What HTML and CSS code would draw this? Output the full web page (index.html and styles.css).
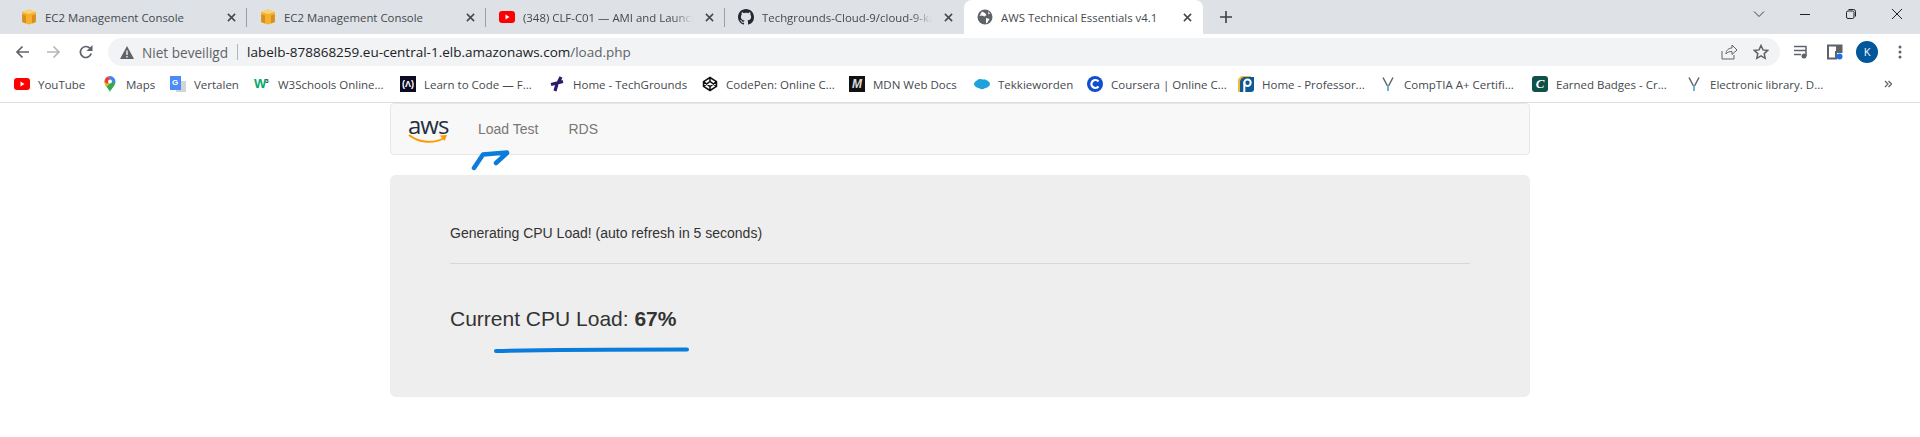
FILE: index.html
```html
<!DOCTYPE html>
<html lang="nl">
<head>
  <meta charset="UTF-8">
  <title>AWS Technical Essentials v4.1</title>
  <link rel="stylesheet" href="styles.css">
</head>
<body>

  <svg class="defs" width="0" height="0" aria-hidden="true">
    <symbol id="ic-box" viewBox="0 0 16 16">
      <path fill="#f5b02e" d="M8 .5 14.800 3v10L8 15.500 1.200 13V3z"/>
      <path fill="#d98f1c" d="M1.200 5.200 5 6.400v8.100l-3.800-1.500zM14.800 5.200 11 6.400v8.100l3.800-1.500z"/>
      <path fill="#fbd27a" d="M8 .5 14.800 3 8 5 1.200 3z"/>
    </symbol>
    <symbol id="ic-close" viewBox="0 0 10 10">
      <path d="M1 1l8 8M9 1L1 9" stroke="#45494e" stroke-width="1.700" fill="none"/>
    </symbol>
    <symbol id="ic-v" viewBox="0 0 16 16">
      <path d="M3 1.500 7.500 10M13 1.500 8.500 10" stroke="#5b6770" stroke-width="1.500" fill="none"/>
      <path d="M8 9.500V15" stroke="#6fb6c9" stroke-width="2" fill="none"/>
    </symbol>
  </svg>

  <header class="browser">
    <div class="tabstrip">
      <div class="tab">
        <svg class="favicon"><use href="#ic-box"/></svg>
        <span class="tab-title">EC2 Management Console</span>
        <svg class="tab-close"><use href="#ic-close"/></svg>
      </div>
      <div class="tab">
        <svg class="favicon"><use href="#ic-box"/></svg>
        <span class="tab-title">EC2 Management Console</span>
        <svg class="tab-close"><use href="#ic-close"/></svg>
      </div>
      <div class="tab">
        <svg class="favicon" viewBox="0 0 16 16"><rect y="2" width="16" height="12" rx="3" fill="#f00"/><path d="M6.500 5.500v5l4-2.500z" fill="#fff"/></svg>
        <span class="tab-title tab-fade">(348) CLF-C01 — AMI and Launch</span>
        <svg class="tab-close"><use href="#ic-close"/></svg>
      </div>
      <div class="tab tab-last">
        <svg class="favicon" viewBox="0 0 16 16"><path fill="#24292f" d="M8 0C3.58 0 0 3.58 0 8c0 3.54 2.29 6.53 5.47 7.59.4.07.55-.17.55-.38 0-.19-.01-.82-.01-1.49-2.01.37-2.53-.49-2.69-.94-.09-.23-.48-.94-.82-1.13-.28-.15-.68-.52-.01-.53.63-.01 1.08.58 1.23.82.72 1.21 1.87.87 2.33.66.07-.52.28-.87.51-1.07-1.78-.2-3.64-.89-3.64-3.95 0-.87.31-1.59.82-2.15-.08-.2-.36-1.02.08-2.12 0 0 .67-.21 2.2.82.64-.18 1.32-.27 2-.27.68 0 1.36.09 2 .27 1.53-1.04 2.2-.82 2.2-.82.44 1.1.16 1.92.08 2.12.51.56.82 1.27.82 2.15 0 3.07-1.87 3.75-3.65 3.95.29.25.54.73.54 1.48 0 1.07-.01 1.93-.01 2.2 0 .21.15.46.55.38A8.013 8.013 0 0016 8c0-4.42-3.58-8-8-8z"/></svg>
        <span class="tab-title tab-fade">Techgrounds-Cloud-9/cloud-9-ka</span>
        <svg class="tab-close"><use href="#ic-close"/></svg>
      </div>
      <div class="tab tab-active">
        <svg class="favicon" viewBox="0 0 16 16"><circle cx="8" cy="8" r="7.500" fill="#5f6368"/><path fill="#fff" d="M5 2.500l3 1.500 1.500 2-2 1.500L5 6.500 2.500 7zM9 9l3.500 1-2 3.500-1.500 1zM11 2.500l2 2-1.500 1z"/></svg>
        <span class="tab-title">AWS Technical Essentials v4.1</span>
        <svg class="tab-close"><use href="#ic-close"/></svg>
      </div>
      <svg class="new-tab" viewBox="0 0 12 12"><path d="M6 0v12M0 6h12" stroke="#3c4043" stroke-width="1.600"/></svg>
      <div class="window-controls">
        <svg viewBox="0 0 12 12"><path d="M1 3.500l5 5 5-5" stroke="#3c4043" fill="none"/></svg>
        <svg viewBox="0 0 12 12"><path d="M1 6.500h10" stroke="#202124" stroke-width="1"/></svg>
        <svg viewBox="0 0 12 12"><rect x="1.500" y="3" width="7.500" height="7.500" rx="1.500" stroke="#202124" fill="none"/><path d="M3.500 1.500h5a2 2 0 0 1 2 2v5" stroke="#202124" fill="none"/></svg>
        <svg viewBox="0 0 12 12"><path d="M1 1l10 10M11 1L1 11" stroke="#202124"/></svg>
      </div>
    </div>

    <div class="toolbar">
      <svg class="nav-btn" viewBox="0 0 14 14"><path d="M14 7H2M7.500 1.500 2 7l5.500 5.500" stroke="#5f6368" stroke-width="1.700" fill="none"/></svg>
      <svg class="nav-btn" viewBox="0 0 14 14"><path d="M0 7h12M6.500 1.500 12 7l-5.500 5.500" stroke="#b4b7ba" stroke-width="1.700" fill="none"/></svg>
      <svg class="nav-btn" viewBox="0 0 14 14"><path d="M12.200 8.500A5.500 5.500 0 1 1 11 3.300" stroke="#5f6368" stroke-width="1.700" fill="none"/><path d="M13.500 0v6h-6z" fill="#5f6368"/></svg>

      <div class="omnibox">
        <svg class="warn" viewBox="0 0 14 13"><path d="M7 0l7 13H0z" fill="#5f6368"/><path d="M6.300 4.500h1.400v4.500H6.300zM6.300 10h1.400v1.400H6.300z" fill="#f1f3f4"/></svg>
        <span class="not-secure">Niet beveiligd</span>
        <span class="omni-divider"></span>
        <span class="url">labelb-878868259.eu-central-1.elb.amazonaws.com<span class="url-path">/load.php</span></span>
        <svg class="omni-icon" viewBox="0 0 16 16"><path d="M1 7v8h12v-4M5 10c0-4 3-6 6-6V1l5 5-5 4.500V7.500C8.500 7.500 6.500 8 5 10z" stroke="#5f6368" fill="none"/></svg>
        <svg class="omni-icon" viewBox="0 0 16 16"><path d="M8 1.500l2 4.400 4.800.5-3.600 3.200 1 4.700L8 11.900l-4.200 2.400 1-4.700L1.200 6.400 6 5.900z" stroke="#5f6368" stroke-width="1.500" fill="none"/></svg>
      </div>

      <svg class="tool-icon" viewBox="0 0 16 16"><path d="M0 2.500h12M0 6.500h12M0 10.500h7" stroke="#5f6368" stroke-width="1.400"/><path d="M12 2v10" stroke="#5f6368" stroke-width="1.500"/><circle cx="10" cy="12" r="2.500" fill="#5f6368"/></svg>
      <svg class="tool-icon" viewBox="0 0 16 16"><path d="M1 1.500h13.500V8H9v6.500H1z" fill="none" stroke="#5f6368" stroke-width="2"/><rect x="9" y="2" width="5" height="6" fill="#5f6368"/><circle cx="12.500" cy="12.500" r="3" fill="#1a73e8"/></svg>
      <span class="avatar">K</span>
      <svg class="menu-dots" viewBox="0 0 4 14"><circle cx="2" cy="2" r="1.500"/><circle cx="2" cy="7" r="1.500"/><circle cx="2" cy="12" r="1.500"/></svg>
    </div>

    <div class="bookmarks">
      <div class="bookmark-list">
        <a class="bookmark">
          <svg class="favicon" viewBox="0 0 16 16"><rect y="2" width="16" height="12" rx="3" fill="#f00"/><path d="M6.500 5.500v5l4-2.500z" fill="#fff"/></svg>
          YouTube
        </a>
        <a class="bookmark">
          <svg class="favicon" viewBox="0 0 16 16"><path fill="#34a853" d="M8 16C7 13 2.500 10 2.500 5.500h11C13.500 10 9 13 8 16z"/><path fill="#fbbc04" d="M2.500 5.500C2.500 8 4 9.500 5 10.500L9 6z"/><path fill="#4285f4" d="M6 .5a5.500 5.500 0 0 1 7.500 5L9.500 7z"/><path fill="#ea4335" d="M2.500 5.500A5.500 5.500 0 0 1 6 .5l3 3.500-4 4z"/><circle cx="8" cy="5.500" r="1.900" fill="#fff"/></svg>
          Maps
        </a>
        <a class="bookmark">
          <span class="favicon ic-translate">G</span>
          Vertalen
        </a>
        <a class="bookmark">
          <span class="favicon ic-w3">W<sup>3</sup></span>
          W3Schools Online...
        </a>
        <a class="bookmark">
          <span class="favicon ic-fcc">(Λ)</span>
          Learn to Code — F...
        </a>
        <a class="bookmark">
          <svg class="favicon" viewBox="0 0 16 16"><path d="M9.500 6 12 1M2 8.500l12-3M8 8l-2 7" stroke="#2d1a6b" stroke-width="3.200" fill="none"/></svg>
          Home - TechGrounds
        </a>
        <a class="bookmark">
          <svg class="favicon" viewBox="0 0 16 16"><path d="M8 1.500l6.500 4.200v4.600L8 14.500 1.500 10.300V5.700zM8 1.500v4M8 10.500v4M1.500 5.700 8 10.500l6.500-4.800M1.500 10.300 8 5.500l6.500 4.800" stroke="#111" stroke-width="1.500" fill="none"/></svg>
          CodePen: Online C...
        </a>
        <a class="bookmark">
          <span class="favicon ic-mdn">M</span>
          MDN Web Docs
        </a>
        <a class="bookmark">
          <svg class="favicon" viewBox="0 0 16 16"><ellipse cx="8" cy="8" rx="8" ry="4.500" fill="#1ea1dc"/><circle cx="6" cy="6" r="3" fill="#1ea1dc"/><circle cx="10.500" cy="6" r="2.500" fill="#1ea1dc"/><circle cx="8" cy="10.500" r="2.800" fill="#1ea1dc"/></svg>
          Tekkieworden
        </a>
        <a class="bookmark">
          <svg class="favicon" viewBox="0 0 16 16"><circle cx="8" cy="8" r="8" fill="#0f4fd1"/><path d="M11.500 5.500a4 4 0 1 0 0 5" stroke="#fff" stroke-width="2.200" fill="none"/></svg>
          Coursera | Online C...
        </a>
        <a class="bookmark">
          <svg class="favicon" viewBox="0 0 16 16"><path d="M5 0h8v3H3v13H0V5a5 5 0 0 1 5-5z" fill="#f3b73b"/><path d="M2 6a5 5 0 0 1 5-5h9v12a3 3 0 0 1-3 3H2z" fill="#0f5a94"/><circle cx="9.500" cy="6.800" r="3.200" fill="none" stroke="#fff" stroke-width="2"/><path d="M6.300 6.500V16" stroke="#fff" stroke-width="2"/></svg>
          Home - Professor...
        </a>
        <a class="bookmark">
          <svg class="favicon"><use href="#ic-v"/></svg>
          CompTIA A+ Certifi...
        </a>
        <a class="bookmark">
          <span class="favicon ic-earned">C</span>
          Earned Badges - Cr...
        </a>
        <a class="bookmark">
          <svg class="favicon"><use href="#ic-v"/></svg>
          Electronic library. D...
        </a>
      </div>
      <svg class="more" viewBox="0 0 8 8"><path d="M1 1l3 3-3 3M4.500 1l3 3-3 3" stroke="#5f6368" stroke-width="1.300" fill="none"/></svg>
    </div>
  </header>

  <main class="container">
    <nav class="navbar">
      <span class="brand">
        <span class="brand-word">aws</span>
        <svg class="brand-smile" viewBox="0 0 40 11"><path d="M1 1c10 8 25 9 35 3" stroke="#f90" stroke-width="2" fill="none"/><path d="M32 1.500 39 1l-2.500 6z" fill="#f90"/></svg>
      </span>
      <a class="nav-link">Load Test</a>
      <a class="nav-link">RDS</a>
    </nav>

    <section class="jumbotron">
      <p class="status">Generating CPU Load! (auto refresh in 5 seconds)</p>
      <hr class="rule">
      <p class="load">Current CPU Load: <b>67%</b></p>
    </section>

    <!-- blauwe markeringen uit de screenshot -->
    <svg class="mark mark-arrow" viewBox="0 0 40 22"><path d="M3 18 12 4.500 36 2.500M25 13 36 3" stroke="#0a7cdb" stroke-width="4.500" stroke-linecap="round" stroke-linejoin="round" fill="none"/></svg>
    <svg class="mark mark-line" viewBox="0 0 200 8"><path d="M3 5C60 3.500 140 3.500 194 3.500" stroke="#0a7cdb" stroke-width="4" stroke-linecap="round" fill="none"/></svg>
  </main>

</body>
</html>
```

FILE: styles.css
```css
* {
  box-sizing: border-box;
}

html, body {
  height: 100%;
}

body {
  margin: 0;
  background-color: #ffffff;
  font-family: "Liberation Sans", Arial, sans-serif;
  overflow: hidden;
}

.defs {
  display: block;
  height: 0;
}

/* browser */

.browser {
  font-family: "Open Sans", "Noto Sans", sans-serif;
  color: #45494e;
}

.tabstrip {
  display: flex;
  align-items: stretch;
  height: 34px;
  padding-left: 8px;
  background-color: #dee1e6;
}

.tab {
  position: relative;
  display: flex;
  align-items: center;
  width: 239px;
  padding: 0 11px 0 13px;
}

.tab::after {
  content: "";
  position: absolute;
  right: 0;
  top: 8px;
  height: 19px;
  width: 1px;
  background-color: #9aa0a6;
}

.tab-last::after {
  display: none;
}

.tab-active {
  background-color: #ffffff;
  border-radius: 8px 8px 0 0;
}

.tab-active::after {
  display: none;
}

.favicon {
  display: block;
  flex: none;
  width: 16px;
  height: 16px;
}

.tab-title {
  flex: 1;
  margin-left: 8px;
  font-size: 11.4px;
  white-space: nowrap;
  overflow: hidden;
}

.tab-fade {
  -webkit-mask-image: linear-gradient(to right, #000 88%, transparent);
  mask-image: linear-gradient(to right, #000 88%, transparent);
}

.tab-close {
  flex: none;
  width: 9px;
  height: 9px;
  margin-left: 12px;
}

.new-tab {
  flex: none;
  width: 12px;
  height: 12px;
  margin: 11px 0 0 17px;
}

.window-controls {
  display: flex;
  gap: 34px;
  margin-left: auto;
  padding: 8px 17px 0 0;
}

.window-controls svg {
  width: 12px;
  height: 12px;
}

.toolbar {
  display: flex;
  align-items: center;
  height: 32px;
  padding: 4px 0 0 15px;
  background-color: #ffffff;
}

.nav-btn {
  flex: none;
  width: 14px;
  height: 14px;
  margin-right: 18px;
}

.omnibox {
  flex: none;
  display: flex;
  align-items: center;
  width: 1672px;
  height: 28px;
  margin: 0 14px 0 -3px;
  padding: 0 11px 0 12px;
  border-radius: 14px;
  background-color: #f1f3f4;
}

.warn {
  flex: none;
  width: 14px;
  height: 13px;
}

.not-secure {
  margin-left: 8px;
  font-size: 13.6px;
  color: #5f6368;
}

.omni-divider {
  width: 1px;
  height: 16px;
  margin: 0 9px;
  background-color: #b4b7ba;
}

.url {
  flex: 1;
  font-size: 13.5px;
  color: #202124;
}

.url-path {
  color: #5f6368;
}

.omni-icon {
  flex: none;
  width: 16px;
  height: 16px;
  margin-left: 16px;
}

.tool-icon {
  flex: none;
  width: 16px;
  height: 16px;
  margin-right: 17px;
}

.avatar {
  flex: none;
  width: 22px;
  height: 22px;
  margin-left: -4px;
  border-radius: 50%;
  background-color: #01579b;
  color: #ffffff;
  font-size: 11px;
  line-height: 22px;
  text-align: center;
}

.menu-dots {
  flex: none;
  width: 4px;
  height: 14px;
  margin-left: 20px;
  fill: #5f6368;
}

.bookmarks {
  display: flex;
  align-items: center;
  height: 37px;
  padding-left: 14px;
  background-color: #ffffff;
  border-bottom: 1px solid #dadce0;
}

.bookmark-list {
  display: grid;
  grid-template-columns: 88px 68px 84px 146px 149px 153px 147px 125px 113px 151px 142px 152px 154px 190px;
}

.bookmark {
  display: flex;
  align-items: center;
  gap: 8px;
  font-size: 11.5px;
  white-space: nowrap;
}

.more {
  width: 8px;
  height: 8px;
  margin-left: 8px;
}

.ic-translate {
  padding-left: 2px;
  background:
    linear-gradient(#4c8bf5, #4c8bf5) 0 0 / 11px 14px no-repeat,
    linear-gradient(#d2d4d7, #d2d4d7) 100% 100% / 10px 11px no-repeat;
  color: #ffffff;
  font: bold 8px/13px "Liberation Sans", sans-serif;
}

.ic-w3 {
  font: bold 13px/16px "Liberation Sans", sans-serif;
  color: #04aa6d;
  white-space: nowrap;
  letter-spacing: -1px;
}

.ic-w3 sup {
  font-size: 6px;
  line-height: 0;
  color: #333333;
  letter-spacing: 0;
}

.ic-fcc {
  background-color: #0a0a23;
  color: #ffffff;
  font: bold 9px/16px "Liberation Sans", sans-serif;
  text-align: center;
}

.ic-mdn {
  background-color: #111111;
  color: #dddddd;
  font: italic bold 12px/16px "Liberation Sans", sans-serif;
  text-align: center;
}

.ic-earned {
  border-radius: 3px;
  background-color: #0d5149;
  color: #ffffff;
  font: italic bold 13px/16px "Liberation Serif", serif;
  text-align: center;
}

/* pagina */

.container {
  position: relative;
  width: 1140px;
  margin: 0 auto;
}

.navbar {
  display: flex;
  align-items: center;
  height: 52px;
  padding-left: 17px;
  background-color: #f8f8f8;
  border: 1px solid #e7e7e7;
  border-radius: 4px;
  margin-bottom: 20px;
}

.brand {
  display: block;
  position: relative;
  width: 40px;
  height: 30px;
  margin-right: 15px;
}

.brand-word {
  display: block;
  font-family: "Open Sans", sans-serif;
  font-size: 24px;
  font-weight: 500;
  line-height: 22px;
  letter-spacing: -1px;
  color: #252f3e;
}

.brand-smile {
  position: absolute;
  left: 0;
  top: 20px;
  width: 40px;
  height: 11px;
}

.nav-link {
  padding: 0 15px;
  font-size: 14px;
  color: #777777;
}

.jumbotron {
  height: 222px;
  padding: 48px 60px;
  border-radius: 6px;
  background-color: #eeeeee;
  color: #333333;
}

.status {
  margin: 0;
  font-size: 14px;
  line-height: 20px;
}

.rule {
  margin: 20px 0;
  border: 0;
  border-top: 1px solid #d8d8d8;
}

.load {
  margin: 40px 0 0;
  font-size: 21px;
  line-height: 30px;
}

.mark {
  position: absolute;
}

.mark-arrow {
  left: 81px;
  top: 47px;
  width: 40px;
  height: 22px;
}

.mark-line {
  left: 103px;
  top: 243px;
  width: 200px;
  height: 8px;
}
```
